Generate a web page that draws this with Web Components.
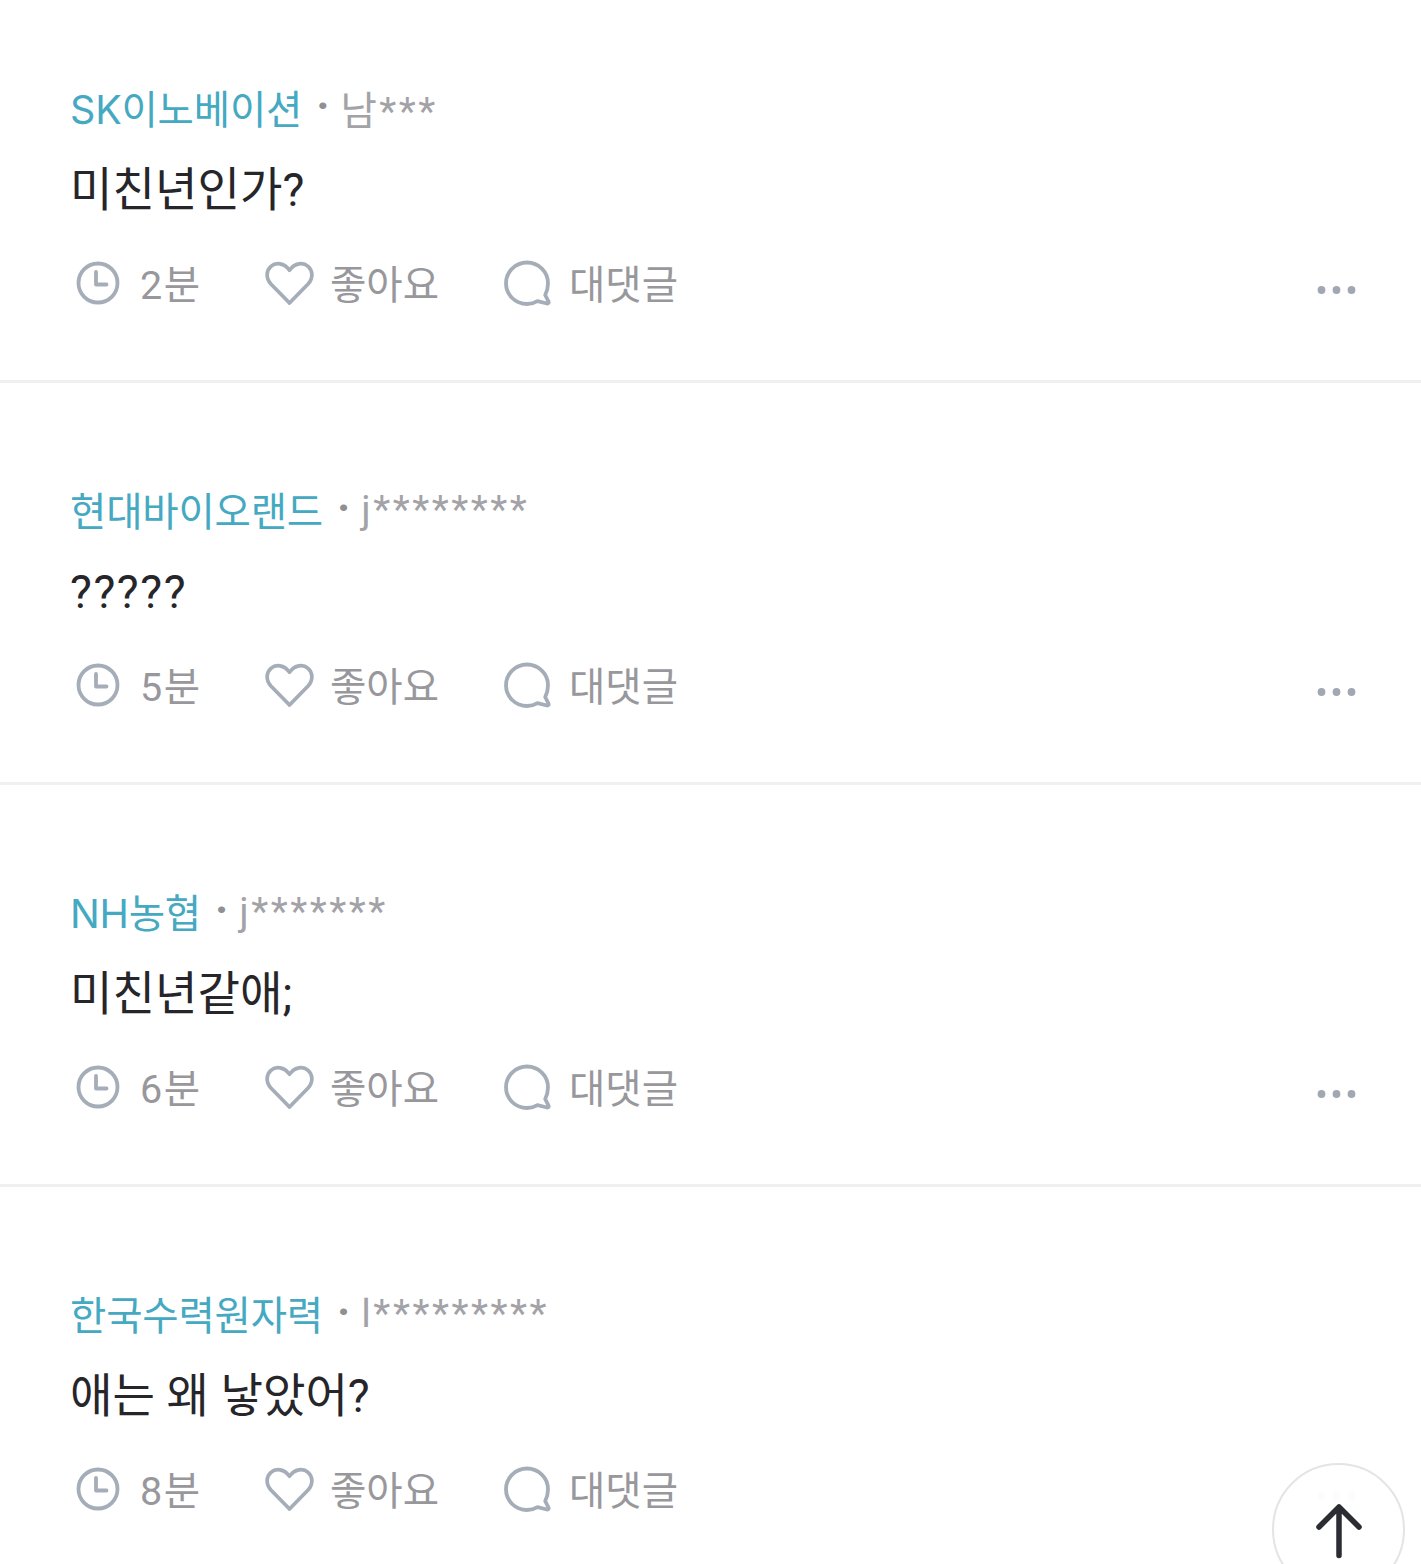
<!doctype html>
<html lang="ko"><head><meta charset="utf-8"><title>댓글</title>
<style>
html,body{margin:0;background:#fff;overflow:hidden;height:1564px}
body{font-family:Roboto,"Noto Sans CJK KR",sans-serif}
</style></head><body>
<comment-list>
<comment-item company="SK이노베이션" user="남***" time="2분" first>미친년인가?</comment-item>
<comment-item company="현대바이오랜드" user="j********" time="5분"><span style="letter-spacing:1.6px">?????</span></comment-item>
<comment-item company="NH농협" user="j*******" time="6분">미친년같애;</comment-item>
<comment-item company="한국수력원자력" user="l*********" time="8분">애는 왜 낳았어?</comment-item>
</comment-list>
<scroll-top></scroll-top>
<script>
const FONT='Roboto,"Noto Sans CJK KR",sans-serif';
class CommentList extends HTMLElement{
  constructor(){super();this.attachShadow({mode:'open'}).innerHTML=`<style>:host{display:block;height:1564px;overflow:hidden}</style><slot></slot>`;}
}
class CommentItem extends HTMLElement{
  connectedCallback(){
    if(this.shadowRoot)return;
    const a=n=>this.getAttribute(n);
    this.attachShadow({mode:'open'}).innerHTML=`<style>
    :host{display:block;height:402px;box-sizing:border-box;border-bottom:3px solid #f0f0f2;padding:100px 64px 0 70px;font-family:${FONT};overflow:hidden}
    :host([first]){height:383px;padding-top:81px}
    .head{display:flex;align-items:center;height:50px;font-size:39.500px;white-space:nowrap}
    .co{color:#45a9c2;font-family:Inter,"Noto Sans CJK KR",sans-serif;letter-spacing:-.2px;margin-top:1px}
    .sep{color:#8f9094;margin:0 11px 0 14px;font-size:44px;font-weight:700;line-height:50px}
    .us{color:#a3a3a7;letter-spacing:2.500px;margin-top:3px}
    .body{height:50px;margin-top:34px;line-height:50px;font-size:46.200px;color:#26262a;white-space:nowrap}
    .meta{display:flex;align-items:center;height:50px;margin-top:43px;color:#98989c;font-size:39.500px;white-space:nowrap}
    .a{display:flex;align-items:center}
    .a span{margin-top:-4px}
    svg{display:block;flex:none}
    .time{width:189px;margin-left:6px}
    .time span{margin-left:20px;letter-spacing:1.500px}
    .like span{margin-left:16px}
    .like{width:239px}
    .re span{margin-left:18px}
    .more{margin-left:auto;margin-top:14px}
    </style>
    <div class="head"><span class="co">${a('company')}</span><span class="sep">·</span><span class="us">${a('user')}</span></div>
    <div class="body"><slot></slot></div>
    <div class="meta">
      <div class="a time"><svg width="44" height="44" viewBox="0 0 44 44" fill="none" stroke="#a5adb9" stroke-width="3.800" stroke-linecap="round" stroke-linejoin="round"><circle cx="22" cy="22" r="19.500"/><path d="M20 11v12.500h10.500"/></svg><span>${a('time')}</span></div>
      <div class="a like"><svg width="49" height="45" viewBox="0 0 50 46" fill="none" stroke="#a5adb9" stroke-width="3.800" stroke-linejoin="round"><path d="M25 43 6 23.500C.5 17.500 1.200 9.800 6 5.500c5-4.300 13.500-3.800 19 4 5.500-7.800 14-8.300 19-4 4.800 4.300 5.500 12 0 18z"/></svg><span>좋아요</span></div>
      <div class="a re"><svg width="47" height="47" viewBox="0 0 47 47" fill="none" stroke="#a5adb9" stroke-width="3.800" stroke-linejoin="round" stroke-linecap="round"><path d="M23 2.500C11.400 2.500 2 11.700 2 23.300S11.400 44 23 44c4 0 7.500-1 10.500-2.800L43 43.500c1.300.2 2-.6 1.500-1.800L41.200 35C43 31.500 44 27.500 44 23.300 44 11.700 34.600 2.500 23 2.500z"/></svg><span>대댓글</span></div>
      <svg class="more" width="40" height="8" viewBox="0 0 40 8" fill="#a1a7b3"><circle cx="4.500" cy="4" r="3.900"/><circle cx="19.500" cy="4" r="3.900"/><circle cx="34.500" cy="4" r="3.900"/></svg>
    </div>`;
  }
}
class ScrollTop extends HTMLElement{
  constructor(){super();this.attachShadow({mode:'open'}).innerHTML=`<style>
  :host{position:fixed;left:1272px;top:1463px;width:133px;height:133px;box-sizing:border-box;border:2.500px solid #e4e4e4;border-radius:50%;background:rgba(255,255,255,.96);display:flex;justify-content:center}
  svg{display:block;margin-top:38px}
  </style><svg width="48" height="56" viewBox="0 0 48 56" fill="none" stroke="#2b2d33" stroke-width="5.500" stroke-linecap="round" stroke-linejoin="round"><path d="M24 52.500V4M4 24 24 4l20 20"/></svg>`;}
}
customElements.define('comment-list',CommentList);
customElements.define('comment-item',CommentItem);
customElements.define('scroll-top',ScrollTop);
</script>
</body></html>
